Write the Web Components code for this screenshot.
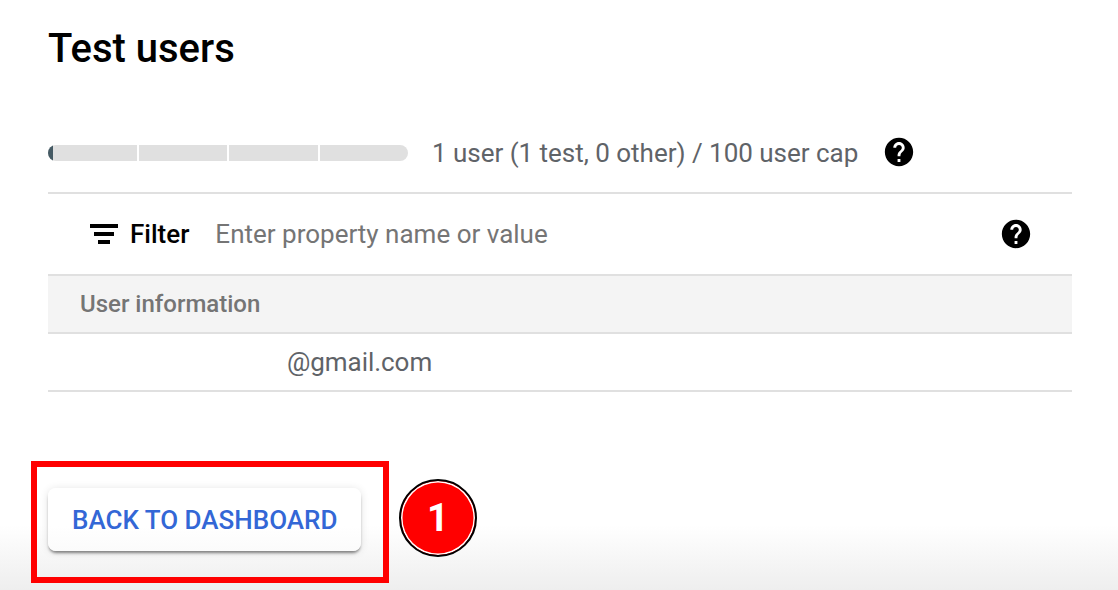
<!DOCTYPE html>
<html><head><meta charset="utf-8">
<style>
html,body{margin:0;padding:0;height:590px;overflow:hidden;background:#fff;font-family:Roboto,"Liberation Sans",sans-serif}
</style></head><body>
<template id="help-t"><style>:host{display:inline-flex;width:34px;height:34px;flex:none}svg{width:34px;height:34px;display:block}</style>
<svg viewBox="0 0 24 24"><path fill="#000" d="M12 2C6.48 2 2 6.48 2 12s4.48 10 10 10 10-4.48 10-10S17.52 2 12 2zm1 17h-2v-2h2v2zm2.07-7.75l-.9.92C13.45 12.9 13 13.5 13 15h-2v-.5c0-1.1.45-2.1 1.17-2.83l1.24-1.26c.37-.36.59-.86.59-1.41 0-1.1-.9-2-2-2s-2 .9-2 2H8c0-2.21 1.79-4 4-4s4 1.79 4 4c0 .88-.36 1.68-.93 2.25z"/></svg></template>
<script>
const def=(n,html,extra)=>customElements.define(n,class extends HTMLElement{constructor(){super();const s=this.attachShadow({mode:'open'});s.innerHTML=html;if(extra)extra(s)}});
customElements.define('help-icon',class extends HTMLElement{constructor(){super();this.attachShadow({mode:'open'}).appendChild(document.getElementById('help-t').content.cloneNode(true))}});
def('cap-bar',`<style>:host{display:block;width:360px;height:16px;flex:none;position:relative;border-radius:8px;overflow:hidden;margin-top:2px}
.g{display:grid;grid-template-columns:repeat(4,1fr);gap:2px;height:100%}.g i{background:#e0e0e0}
.f{position:absolute;left:0;top:0;bottom:0;width:5px;background:#455a64}</style><div class="g"><i></i><i></i><i></i><i></i></div><div class="f"></div>`);
def('user-cap',`<style>:host{display:flex;align-items:center;height:80px;border-bottom:2px solid #e0e0e0}
span{margin-left:24px;font-size:26px;letter-spacing:-.02px;color:#5f6368;line-height:32px;white-space:nowrap;padding-top:1px}help-icon{margin-left:24px}</style>
<cap-bar></cap-bar><span><slot></slot></span><help-icon></help-icon>`);
def('filter-bar',`<style>:host{display:flex;align-items:center;height:80px;border-bottom:2px solid #e0e0e0;padding:0 39px 0 40px}
svg{width:32px;height:32px;flex:none;display:block}
b{font-weight:500;font-size:26px;color:#000;margin-left:10px}
span{margin-left:26px;font-size:26px;color:#757575;flex:1;white-space:nowrap}</style>
<svg viewBox="0 0 32 32"><path fill="#000" d="M2 6h28v4H2zM6 14h20v4H6zM10 22h12v4H10z"/></svg><b>Filter</b><span><slot></slot></span><help-icon></help-icon>`);
def('table-head',`<style>:host{display:flex;align-items:center;height:56px;background:#f4f4f4;border-bottom:2px solid #e0e0e0;padding-left:32px;font-weight:500;font-size:24px;color:#757575}</style><slot></slot>`);
def('table-row',`<style>:host{display:flex;align-items:center;height:56px;border-bottom:2px solid #e0e0e0;padding-left:239px;font-size:26px;letter-spacing:-.05px;color:#5f6368}</style><slot></slot>`);
def('raised-button',`<style>:host{display:inline-flex;align-items:center;height:63px;padding:0 24px;border-radius:8px;background:linear-gradient(#fff 60%,#fbfbfb);box-shadow:0 3px 3px -1px rgba(0,0,0,.45),0 1px 8px rgba(0,0,0,.12);font-weight:500;font-size:26px;color:#3367d6;white-space:nowrap}</style><slot></slot>`);
def('step-badge',`<style>:host{position:absolute;display:flex;align-items:center;justify-content:center;box-sizing:border-box;width:78px;height:78px;border-radius:50%;background:#f00;border:2.5px solid #000;box-shadow:inset 0 0 0 1.5px #fff;color:#fff;font-weight:700;font-size:38px}</style><slot></slot>`);
def('callout-box',`<style>:host{position:absolute;box-sizing:border-box;border:6px solid #f00}</style>`);
def('consent-page',`<style>:host{display:block;position:relative;height:590px;box-sizing:border-box;padding:0 46px 0 48px;background:linear-gradient(#fff 0,#fff 525px,#eeeeee 590px)}
h1{margin:0;height:112px;padding-top:25px;box-sizing:border-box;font-size:40px;line-height:48px;font-weight:500;color:#000}
.act{margin-top:96px}
callout-box{left:31px;top:461px;width:358px;height:122px}step-badge{left:399px;top:479px}</style>
<h1>Test users</h1><user-cap>1 user (1 test, 0 other) / 100 user cap</user-cap><filter-bar>Enter property name or value</filter-bar>
<table-head>User information</table-head><table-row>@gmail.com</table-row>
<div class="act"><raised-button>BACK TO DASHBOARD</raised-button></div>
<callout-box></callout-box><step-badge>1</step-badge>`);
</script>
<consent-page></consent-page>
</body></html>
